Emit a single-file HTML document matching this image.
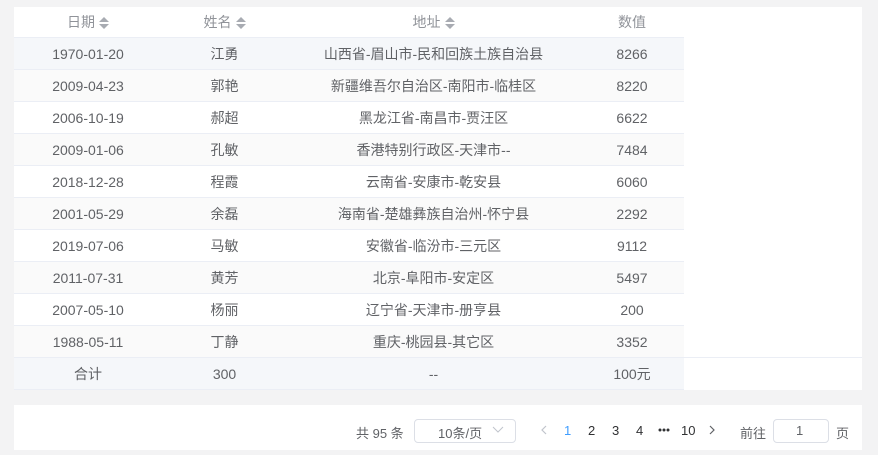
<!DOCTYPE html>
<html><head><meta charset="utf-8"><style>
body{margin:0;width:878px;height:455px;background:#f3f3f4;font-family:"Liberation Sans","Noto Sans CJK SC",sans-serif;font-size:14px;color:#606266;position:relative;overflow:hidden}
.panel{position:absolute;left:14px;top:7px;width:848px;height:383px;background:#fff}
table{border-collapse:collapse;width:670px;table-layout:fixed;position:absolute;left:0;top:0}
td,th{height:31px;border-bottom:1px solid #ebeef5;text-align:center;padding:0;font-weight:normal}
th{color:#909399;height:30px}
tr.s td{background:#fafafa}
tr.h td{background:#f5f7fa}
tr.sum td{background:#f5f7fa}
.ar{display:inline-block;vertical-align:middle;margin-left:4px;width:10px;height:12px;position:relative}
.ar:before{content:"";position:absolute;left:0;top:0;border:5px solid transparent;border-bottom-color:#a8abb2;border-top:0}
.ar:after{content:"";position:absolute;left:0;top:7px;border:5px solid transparent;border-top-color:#a8abb2;border-bottom:0}
.line{position:absolute;left:670px;top:350px;width:178px;border-top:1px solid #ebeef5}
.pg{position:absolute;left:14px;top:405px;width:848px;height:45px;background:#fff;font-size:13px}
.pg span{position:absolute;top:18px}
.box{position:absolute;border:1px solid #dcdfe6;border-radius:4px;background:#fff}
</style></head><body>
<div class="panel">
<table>
<colgroup><col style="width:148px"><col style="width:125px"><col style="width:293px"><col style="width:104px"></colgroup>
<tr><th>日期<i class="ar"></i></th><th>姓名<i class="ar"></i></th><th>地址<i class="ar"></i></th><th>数值</th></tr>
<tr class="h"><td>1970-01-20</td><td>江勇</td><td>山西省-眉山市-民和回族土族自治县</td><td>8266</td></tr>
<tr class="s"><td>2009-04-23</td><td>郭艳</td><td>新疆维吾尔自治区-南阳市-临桂区</td><td>8220</td></tr>
<tr><td>2006-10-19</td><td>郝超</td><td>黑龙江省-南昌市-贾汪区</td><td>6622</td></tr>
<tr class="s"><td>2009-01-06</td><td>孔敏</td><td>香港特别行政区-天津市--</td><td>7484</td></tr>
<tr><td>2018-12-28</td><td>程霞</td><td>云南省-安康市-乾安县</td><td>6060</td></tr>
<tr class="s"><td>2001-05-29</td><td>余磊</td><td>海南省-楚雄彝族自治州-怀宁县</td><td>2292</td></tr>
<tr><td>2019-07-06</td><td>马敏</td><td>安徽省-临汾市-三元区</td><td>9112</td></tr>
<tr class="s"><td>2011-07-31</td><td>黄芳</td><td>北京-阜阳市-安定区</td><td>5497</td></tr>
<tr><td>2007-05-10</td><td>杨丽</td><td>辽宁省-天津市-册亨县</td><td>200</td></tr>
<tr class="s"><td>1988-05-11</td><td>丁静</td><td>重庆-桃园县-其它区</td><td>3352</td></tr>
<tr class="sum"><td>合计</td><td>300</td><td>--</td><td>100元</td></tr>
</table>
<div class="line"></div>
</div>
<div class="pg">
<span style="left:342px">共 95 条</span>
<div class="box" style="left:400px;top:14px;width:100px;height:22px"></div>
<span style="left:424px">10条/页</span>
<svg style="position:absolute;left:478px;top:21px" width="12" height="8"><path d="M1 1L6 6L11 1" fill="none" stroke="#c0c4cc" stroke-width="1"/></svg>
<svg style="position:absolute;left:526px;top:20px" width="8" height="10"><path d="M6 1L2 5L6 9" fill="none" stroke="#c0c4cc" stroke-width="1.2"/></svg>
<span style="left:550px;color:#409eff">1</span>
<span style="left:574px;color:#303133">2</span>
<span style="left:598px;color:#303133">3</span>
<span style="left:622px;color:#303133">4</span>
<svg style="position:absolute;left:644px;top:23px" width="12" height="4"><circle cx="2" cy="2" r="1.5" fill="#303133"/><circle cx="6" cy="2" r="1.5" fill="#303133"/><circle cx="10" cy="2" r="1.5" fill="#303133"/></svg>
<span style="left:667px;color:#303133">10</span>
<svg style="position:absolute;left:694px;top:20px" width="8" height="10"><path d="M2 1L6 5L2 9" fill="none" stroke="#606266" stroke-width="1.2"/></svg>
<span style="left:726px">前往</span>
<div class="box" style="left:759px;top:14px;width:54px;height:22px"></div>
<span style="left:782px">1</span>
<span style="left:822px">页</span>
</div>
</body></html>
